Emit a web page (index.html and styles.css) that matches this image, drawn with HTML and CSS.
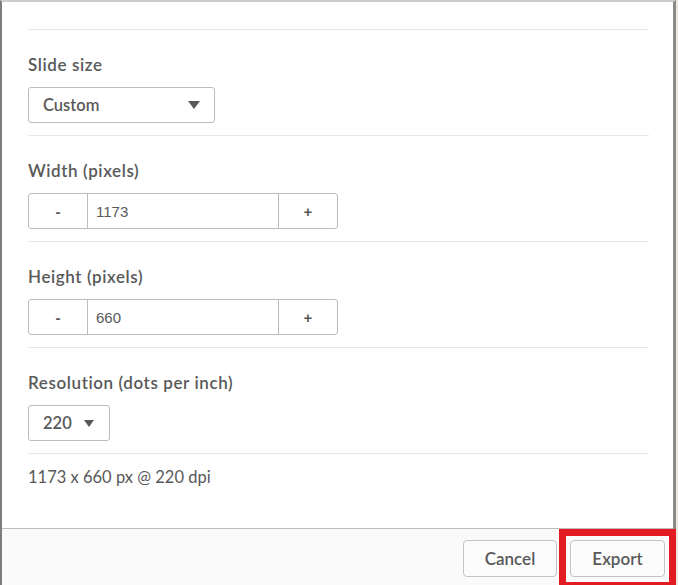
FILE: index.html
```html
<!DOCTYPE html>
<html>
<head>
<meta charset="utf-8">
<link rel="stylesheet" href="styles.css">
</head>
<body>
<div class="dialog">
  <div class="content">
    <div class="spacer"></div>
    <section class="section">
      <div class="label">Slide size</div>
      <div class="select select-wide">
        <span class="select-text">Custom</span>
        <span class="caret"></span>
      </div>
    </section>
    <section class="section">
      <div class="label">Width (pixels)</div>
      <div class="spinner">
        <div class="spin-btn">-</div>
        <div class="spin-input">1173</div>
        <div class="spin-btn">+</div>
      </div>
    </section>
    <section class="section">
      <div class="label">Height (pixels)</div>
      <div class="spinner">
        <div class="spin-btn">-</div>
        <div class="spin-input">660</div>
        <div class="spin-btn">+</div>
      </div>
    </section>
    <section class="section">
      <div class="label">Resolution (dots per inch)</div>
      <div class="select select-small">
        <span class="select-text">220</span>
        <span class="caret caret-small"></span>
      </div>
    </section>
    <section class="section summary">1173 x 660 px @ 220 dpi</section>
  </div>
  <div class="footer">
    <div class="btn btn-cancel">Cancel</div>
    <div class="btn">Export</div>
  </div>
  <div class="highlight"></div>
</div>
</body>
</html>
```
FILE: styles.css
```css
html, body {
  margin: 0;
  padding: 0;
}
body {
  width: 678px;
  height: 585px;
  overflow: hidden;
  background: #ece6dc;
  font-family: "Lato", "Open Sans", sans-serif;
  color: #595959;
}
.dialog {
  position: relative;
  box-sizing: border-box;
  width: 676px;
  height: 585px;
  background: #fff;
  border-left: 2px solid #7d7d7d;
  border-right: 3px solid #8a8a8a;
  border-top: 2px solid #cdcdcd;
  display: flex;
  flex-direction: column;
}
.content {
  flex: 1;
  padding: 0 24px 0 26px;
}
.spacer {
  height: 27px;
}
.section {
  border-top: 1px solid #e8e8e8;
  padding: 25px 0 12px;
}
.label {
  font-size: 17px;
  line-height: 20px;
  font-weight: 600;
  letter-spacing: 0.6px;
  margin-bottom: 12px;
}
.select {
  box-sizing: border-box;
  height: 36px;
  border: 1px solid #bcbcbc;
  border-radius: 3px;
  display: flex;
  align-items: center;
  justify-content: space-between;
  padding: 0 14px 0 14px;
  font-size: 16.5px;
  font-weight: 600;
}
.select-wide {
  width: 187px;
}
.select-small {
  width: 82px;
  padding: 0 15px 0 14px;
}
.caret {
  width: 0;
  height: 0;
  border-left: 6.5px solid transparent;
  border-right: 6.5px solid transparent;
  border-top: 8px solid #595959;
}
.caret-small {
  border-left-width: 5.5px;
  border-right-width: 5.5px;
  border-top-width: 7px;
}
.spinner {
  box-sizing: border-box;
  width: 310px;
  height: 36px;
  border: 1px solid #bcbcbc;
  border-radius: 3px;
  display: flex;
}
.spin-btn {
  width: 58px;
  display: flex;
  align-items: center;
  justify-content: center;
  font-family: "Liberation Sans", Arial, sans-serif;
  font-size: 15px;
  font-weight: 700;
  color: #595959;
}
.spin-input {
  flex: 1;
  border-left: 1px solid #bcbcbc;
  border-right: 1px solid #bcbcbc;
  display: flex;
  align-items: center;
  padding-left: 8px;
  font-family: "Liberation Sans", Arial, sans-serif;
  font-size: 15px;
  color: #595959;
}
.summary {
  padding-top: 13px;
  font-size: 16.5px;
  line-height: 20px;
  font-weight: 400;
}
.footer {
  height: 57px;
  box-sizing: border-box;
  border-top: 1px solid #bdbdbd;
  background: #fafafa;
  display: flex;
  justify-content: flex-end;
  gap: 13px;
  padding: 11px 8px 0 0;
}
.btn {
  box-sizing: border-box;
  width: 95px;
  height: 37px;
  border: 1px solid #c4c4c4;
  border-radius: 4px;
  background: #fcfcfc;
  display: flex;
  align-items: center;
  justify-content: center;
  font-size: 17px;
  font-weight: 600;
  color: #595959;
}
.btn-cancel {
  width: 94px;
}
.highlight {
  position: absolute;
  left: 557px;
  top: 527px;
  width: 117px;
  height: 60px;
  box-sizing: border-box;
  border: 7px solid #e31b23;
}
```
